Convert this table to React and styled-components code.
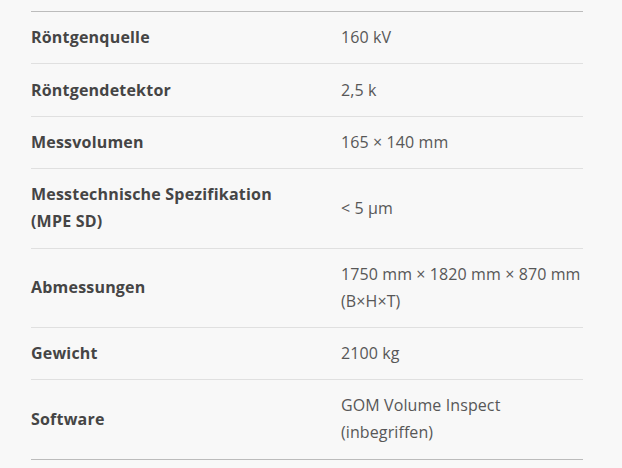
import React from 'react';
import styled, { createGlobalStyle } from 'styled-components';

const GlobalStyle = createGlobalStyle`
  html, body {
    margin: 0;
    padding: 0;
    background: #f8f8f8;
  }
  body {
    font-family: 'Open Sans', 'Noto Sans', Arial, sans-serif;
  }
`;

const Page = styled.div`
  padding: 11px 39px 0 31px;
`;

const SpecTable = styled.table`
  width: 552px;
  border-collapse: collapse;
  border-top: 1px solid #bcbcbc;
  border-bottom: 1px solid #bcbcbc;
  font-size: 16px;
  line-height: 27px;
`;

const Row = styled.tr`
  & + & td {
    border-top: 1px solid #e0e0e0;
  }
`;

const Label = styled.td`
  width: 310px;
  padding: 12.2px 0;
  color: #454545;
  font-weight: 700;
  letter-spacing: 0.2px;
  vertical-align: middle;
`;

const Value = styled.td`
  padding: 12.2px 0;
  color: #575757;
  font-weight: 400;
  letter-spacing: 0.1px;
  white-space: nowrap;
  vertical-align: middle;
`;

const specs = [
  { label: 'Röntgenquelle', value: ['160 kV'] },
  { label: 'Röntgendetektor', value: ['2,5 k'] },
  { label: 'Messvolumen', value: ['165 × 140 mm'] },
  { label: ['Messtechnische Spezifikation', '(MPE SD)'], value: ['< 5 µm'] },
  { label: 'Abmessungen', value: ['1750 mm × 1820 mm × 870 mm', '(B×H×T)'] },
  { label: 'Gewicht', value: ['2100 kg'] },
  { label: 'Software', value: ['GOM Volume Inspect', '(inbegriffen)'] },
];

const lines = (text) => {
  const parts = Array.isArray(text) ? text : [text];
  return parts.map((part, i) => (
    <React.Fragment key={i}>
      {i > 0 && <br />}
      {part}
    </React.Fragment>
  ));
};

function App() {
  return (
    <>
      <GlobalStyle />
      <Page>
        <SpecTable>
          <tbody>
            {specs.map((spec, index) => (
              <Row key={index}>
                <Label>{lines(spec.label)}</Label>
                <Value>{lines(spec.value)}</Value>
              </Row>
            ))}
          </tbody>
        </SpecTable>
      </Page>
    </>
  );
}

export default App;
